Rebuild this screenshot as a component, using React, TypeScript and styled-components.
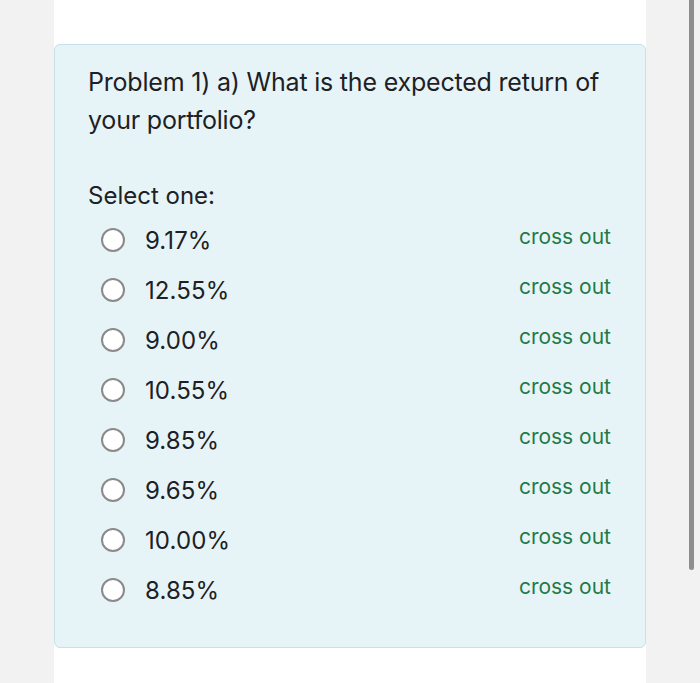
import * as React from "react";
import styled, { createGlobalStyle } from "styled-components";

const GlobalStyle = createGlobalStyle`
  html, body {
    margin: 0;
    padding: 0;
    background: #f2f2f2;
  }
  body {
    font-family: Inter, "Liberation Sans", sans-serif;
    color: #1d2125;
  }
`;

const Page = styled.div`
  position: relative;
  width: 700px;
  height: 683px;
  overflow: hidden;
`;

const Column = styled.div`
  margin-left: 54px;
  width: 592px;
  height: 683px;
  background: #ffffff;
  padding-top: 44px;
  box-sizing: border-box;
`;

const Card = styled.div`
  height: 604px;
  box-sizing: border-box;
  background: #e7f4f7;
  border: 1px solid #c6e1e7;
  border-radius: 6px;
  padding: 18px 34px 0 33px;
`;

const Question = styled.div`
  font-size: 25px;
  line-height: 38px;
  letter-spacing: -0.2px;
`;

const Prompt = styled.div`
  margin-top: 38px;
  font-size: 24px;
  line-height: 38px;
`;

const Options = styled.div`
  display: flex;
  flex-direction: column;
`;

const Row = styled.div`
  display: flex;
  align-items: center;
  height: 50px;
`;

const Radio = styled.span`
  width: 24px;
  height: 24px;
  box-sizing: border-box;
  border: 2.5px solid #8a8a8a;
  border-radius: 50%;
  background: #ffffff;
  margin-left: 13px;
  margin-right: 20px;
  flex: none;
`;

const Label = styled.span`
  font-size: 24px;
  flex: 1;
  letter-spacing: 0.1px;
`;

const CrossOut = styled.span`
  font-size: 21px;
  color: #1f7a48;
  margin-top: -8px;
`;

const Scrollbar = styled.div`
  position: absolute;
  left: 689px;
  top: 0;
  width: 5px;
  height: 570px;
  border-radius: 0 0 3px 3px;
  background: #8e8e8e;
`;

const choices = ["9.17%", "12.55%", "9.00%", "10.55%", "9.85%", "9.65%", "10.00%", "8.85%"];

export default function App() {
  return (
    <Page>
      <GlobalStyle />
      <Column>
        <Card>
          <Question>
            Problem 1) a) What is the expected return of
            <br />
            your portfolio?
          </Question>
          <Prompt>Select one:</Prompt>
          <Options>
            {choices.map((c) => (
              <Row key={c}>
                <Radio />
                <Label>{c}</Label>
                <CrossOut>cross out</CrossOut>
              </Row>
            ))}
          </Options>
        </Card>
      </Column>
      <Scrollbar />
    </Page>
  );
}
